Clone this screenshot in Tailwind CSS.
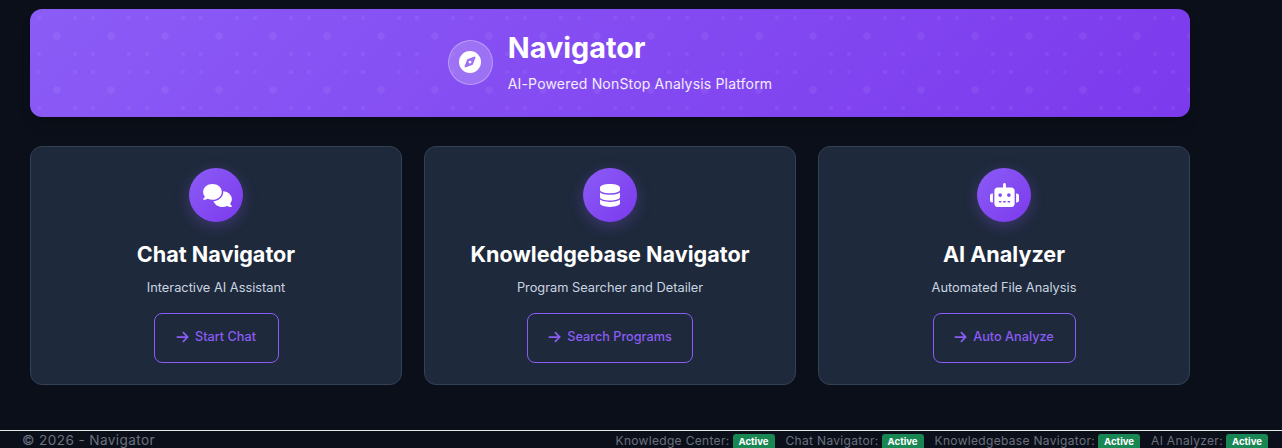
<!DOCTYPE html>
<html lang="en">
<head>
    <meta charset="UTF-8">
    <meta name="viewport" content="width=device-width, initial-scale=1.0">
    <title>Navigator</title>
    <script src="https://cdn.jsdelivr.net/npm/@tailwindcss/browser@4"></script>
</head>
<body class="bg-[#0b0f19] h-screen overflow-hidden flex flex-col font-['Inter',sans-serif]">

    <main class="flex-1 pt-[9px] pl-[30px] w-[1190px]">
        <!-- Header -->
        <header class="relative h-[108px] rounded-xl bg-linear-[135deg,#8b5cf6,#7c3aed] flex items-center justify-center gap-[15px] shadow-lg overflow-hidden">
            <div class="absolute inset-0 bg-size-[54px_54px] bg-[radial-gradient(circle_at_9px_9px,rgba(255,255,255,0.05)_2px,transparent_2.5px),radial-gradient(circle_at_45px_9px,rgba(255,255,255,0.05)_2px,transparent_2.5px),radial-gradient(circle_at_9px_45px,rgba(255,255,255,0.05)_2px,transparent_2.5px),radial-gradient(circle_at_45px_45px,rgba(255,255,255,0.05)_2px,transparent_2.5px),radial-gradient(circle_at_27px_27px,rgba(255,255,255,0.06)_3.5px,transparent_4px)]"></div>
            <div class="relative w-[45px] h-[45px] mt-[-2px] rounded-full bg-white/20 border border-white/30 flex items-center justify-center">
                <svg class="w-[22px] h-[22px]" viewBox="0 0 512 512" fill="#fff"><path d="M256 512A256 256 0 1 0 256 0a256 256 0 1 0 0 512zm50.7-186.9L162.4 380.6c-19.4 7.5-38.5-11.6-31-31l55.5-144.3c3.3-8.5 9.9-15.1 18.4-18.4l144.3-55.5c19.4-7.5 38.5 11.6 31 31L325.1 306.7c-3.2 8.5-9.9 15.1-18.4 18.4zM288 256a32 32 0 1 0 -64 0 32 32 0 1 0 64 0z"/></svg>
            </div>
            <div class="relative text-white mt-[-4px]">
                <h1 class="text-[28.8px] leading-[34px] font-bold">Navigator</h1>
                <p class="mt-[10px] text-sm leading-[17px] tracking-[0.18px] text-white/90">AI-Powered NonStop Analysis Platform</p>
            </div>
        </header>

        <!-- Cards -->
        <section class="mt-[29px] grid grid-cols-3 gap-[22px]">
            <div class="h-[239px] rounded-xl bg-[#1e293b] border border-[#334155] flex flex-col items-center pt-[21px]">
                <div class="w-[54px] h-[54px] rounded-full bg-linear-[135deg,#8b5cf6,#7c3aed] shadow-[0_4px_15px_rgba(139,92,246,0.3)] flex items-center justify-center">
                    <svg class="w-[29px] h-[23px] ml-[2px]" viewBox="0 0 640 512" fill="#fff"><path d="M208 352c114.9 0 208-78.8 208-176S322.9 0 208 0S0 78.8 0 176c0 38.6 14.7 74.3 39.6 103.4c-3.5 9.4-8.7 17.7-14.2 24.7c-4.8 6.2-9.7 11-13.3 14.3c-1.8 1.6-3.3 2.9-4.3 3.7c-.5 .4-.9 .7-1.1 .8l-.2 .2 0 0 0 0C1 327.2-1.4 334.4 .8 340.9S9.1 352 16 352c21.8 0 43.8-5.6 62.1-12.5c9.2-3.5 17.8-7.4 25.3-11.4C134.1 343.3 169.8 352 208 352zM448 176c0 112.3-99.1 196.9-216.5 207C255.8 457.7 336.1 512 432 512c38.2 0 73.9-8.7 104.7-23.9c7.5 4 16 7.9 25.2 11.4c18.3 6.9 40.3 12.5 62.1 12.5c6.9 0 13.1-4.5 15.2-11.1c2.1-6.6-.2-13.8-5.8-17.9l0 0 0 0-.2-.2c-.2-.2-.6-.4-1.1-.8c-1-.8-2.5-2-4.3-3.7c-3.6-3.3-8.5-8.1-13.3-14.3c-5.5-7-10.7-15.4-14.2-24.7c24.9-29 39.6-64.7 39.6-103.4c0-92.8-84.9-168.9-192.6-175.5c.4 5.1 .6 10.3 .6 15.5z"/></svg>
                </div>
                <h2 class="mt-[17px] text-[21.6px] leading-[30px] font-bold text-white">Chat Navigator</h2>
                <p class="mt-[11px] text-[12.8px] leading-[16px] text-[#cbd5e1]">Interactive AI Assistant</p>
                <a class="mt-[17px] h-[50px] w-[125px] pb-[2px] rounded-lg border border-[#8b5cf6] text-[#8b5cf6] text-[12.7px] font-medium flex items-center justify-center gap-[6px]">
                    <svg class="w-[13px] h-[14px]" viewBox="0 0 448 512" fill="#8b5cf6"><path d="M438.6 278.6c12.5-12.5 12.5-32.8 0-45.3l-160-160c-12.5-12.5-32.8-12.5-45.3 0s-12.5 32.8 0 45.3L338.8 224 32 224c-17.7 0-32 14.3-32 32s14.3 32 32 32l306.7 0L233.4 393.4c-12.5 12.5-12.5 32.8 0 45.3s32.8 12.5 45.3 0l160-160z"/></svg>
                    Start Chat
                </a>
            </div>

            <div class="h-[239px] rounded-xl bg-[#1e293b] border border-[#334155] flex flex-col items-center pt-[21px]">
                <div class="w-[54px] h-[54px] rounded-full bg-linear-[135deg,#8b5cf6,#7c3aed] shadow-[0_4px_15px_rgba(139,92,246,0.3)] flex items-center justify-center">
                    <svg class="w-[20px] h-[23px]" viewBox="0 0 448 512" fill="#fff"><path d="M448 80v48c0 44.2-100.3 80-224 80S0 172.2 0 128V80C0 35.8 100.3 0 224 0S448 35.8 448 80zM393.2 214.7c20.8-7.4 39.9-16.9 54.8-28.6V288c0 44.2-100.3 80-224 80S0 332.2 0 288V186.1c14.9 11.8 34 21.2 54.8 28.6C99.7 230.7 159.5 240 224 240s124.3-9.3 169.2-25.3zM0 346.1c14.9 11.8 34 21.2 54.8 28.6C99.7 390.7 159.5 400 224 400s124.3-9.3 169.2-25.3c20.8-7.4 39.9-16.9 54.8-28.6V432c0 44.2-100.3 80-224 80S0 476.2 0 432V346.1z"/></svg>
                </div>
                <h2 class="mt-[17px] text-[21.6px] leading-[30px] font-bold text-white">Knowledgebase Navigator</h2>
                <p class="mt-[11px] text-[12.8px] leading-[16px] text-[#cbd5e1]">Program Searcher and Detailer</p>
                <a class="mt-[17px] h-[50px] w-[166px] pb-[2px] rounded-lg border border-[#8b5cf6] text-[#8b5cf6] text-[12.7px] font-medium flex items-center justify-center gap-[6px]">
                    <svg class="w-[13px] h-[14px]" viewBox="0 0 448 512" fill="#8b5cf6"><path d="M438.6 278.6c12.5-12.5 12.5-32.8 0-45.3l-160-160c-12.5-12.5-32.8-12.5-45.3 0s-12.5 32.8 0 45.3L338.8 224 32 224c-17.7 0-32 14.3-32 32s14.3 32 32 32l306.7 0L233.4 393.4c-12.5 12.5-12.5 32.8 0 45.3s32.8 12.5 45.3 0l160-160z"/></svg>
                    Search Programs
                </a>
            </div>

            <div class="h-[239px] rounded-xl bg-[#1e293b] border border-[#334155] flex flex-col items-center pt-[21px]">
                <div class="w-[54px] h-[54px] rounded-full bg-linear-[135deg,#8b5cf6,#7c3aed] shadow-[0_4px_15px_rgba(139,92,246,0.3)] flex items-center justify-center">
                    <svg class="w-[29px] h-[24px]" viewBox="0 0 640 512" preserveAspectRatio="none" fill="#fff"><path d="M320 0c17.7 0 32 14.3 32 32V96H472c39.8 0 72 32.2 72 72V440c0 39.8-32.2 72-72 72H168c-39.8 0-72-32.2-72-72V168c0-39.8 32.2-72 72-72H288V32c0-17.7 14.3-32 32-32zM208 384c-8.8 0-16 7.2-16 16s7.2 16 16 16h32c8.8 0 16-7.2 16-16s-7.2-16-16-16H208zm96 0c-8.8 0-16 7.2-16 16s7.2 16 16 16h32c8.8 0 16-7.2 16-16s-7.2-16-16-16H304zm96 0c-8.8 0-16 7.2-16 16s7.2 16 16 16h32c8.8 0 16-7.2 16-16s-7.2-16-16-16H400zM264 256a40 40 0 1 0 -80 0 40 40 0 1 0 80 0zm152 40a40 40 0 1 0 0-80 40 40 0 1 0 0 80zM48 224H64V416H48c-26.5 0-48-21.5-48-48V272c0-26.5 21.5-48 48-48zm544 0c26.5 0 48 21.5 48 48v96c0 26.5-21.5 48-48 48H576V224h16z"/></svg>
                </div>
                <h2 class="mt-[17px] text-[21.6px] leading-[30px] font-bold text-white">AI Analyzer</h2>
                <p class="mt-[11px] text-[12.8px] leading-[16px] text-[#cbd5e1]">Automated File Analysis</p>
                <a class="mt-[17px] h-[50px] w-[143px] pb-[2px] rounded-lg border border-[#8b5cf6] text-[#8b5cf6] text-[12.7px] font-medium flex items-center justify-center gap-[6px]">
                    <svg class="w-[13px] h-[14px]" viewBox="0 0 448 512" fill="#8b5cf6"><path d="M438.6 278.6c12.5-12.5 12.5-32.8 0-45.3l-160-160c-12.5-12.5-32.8-12.5-45.3 0s-12.5 32.8 0 45.3L338.8 224 32 224c-17.7 0-32 14.3-32 32s14.3 32 32 32l306.7 0L233.4 393.4c-12.5 12.5-12.5 32.8 0 45.3s32.8 12.5 45.3 0l160-160z"/></svg>
                    Auto Analyze
                </a>
            </div>
        </section>
    </main>

    <!-- Footer -->
    <footer class="h-[18px] shrink-0 border-t border-white/90 flex items-start justify-between pt-px pl-[22px] pr-[14px] text-[13.6px] leading-[17px] tracking-[0.4px] text-[#6b7280]">
        <span>© 2026 - Navigator</span>
        <div class="flex items-start gap-[11px] text-xs leading-[17px] tracking-[0.32px]">
            <span class="flex items-start gap-[3px]">Knowledge Center: <span class="mt-[2px] h-[16px] px-[6px] rounded-[3px] bg-[#198754] text-white text-[9.6px] leading-[16px] font-bold tracking-normal">Active</span></span>
            <span class="flex items-start gap-[3px]">Chat Navigator: <span class="mt-[2px] h-[16px] px-[6px] rounded-[3px] bg-[#198754] text-white text-[9.6px] leading-[16px] font-bold tracking-normal">Active</span></span>
            <span class="flex items-start gap-[3px]">Knowledgebase Navigator: <span class="mt-[2px] h-[16px] px-[6px] rounded-[3px] bg-[#198754] text-white text-[9.6px] leading-[16px] font-bold tracking-normal">Active</span></span>
            <span class="flex items-start gap-[3px]">AI Analyzer: <span class="mt-[2px] h-[16px] px-[6px] rounded-[3px] bg-[#198754] text-white text-[9.6px] leading-[16px] font-bold tracking-normal">Active</span></span>
        </div>
    </footer>

</body>
</html>
